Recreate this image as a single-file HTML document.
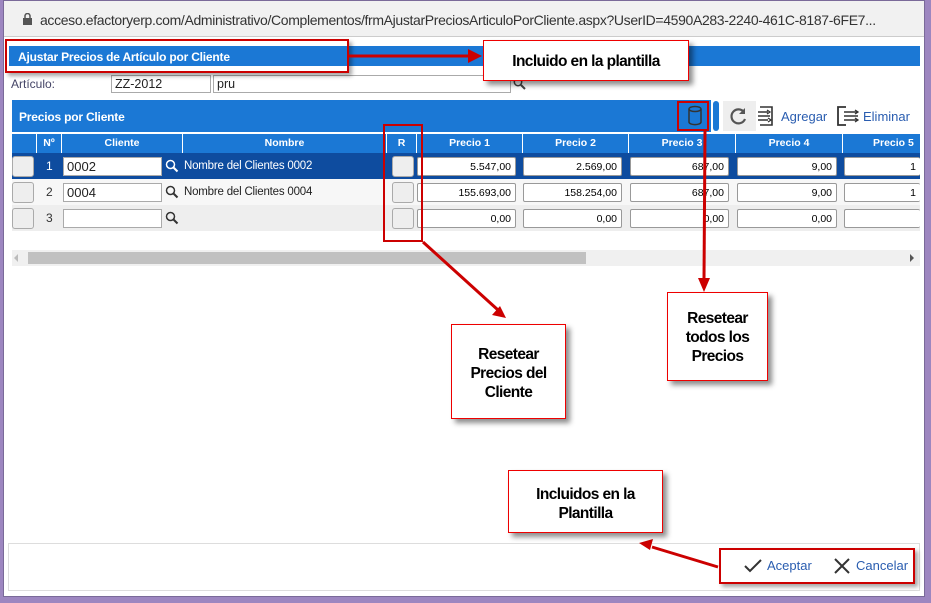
<!DOCTYPE html>
<html><head><meta charset="utf-8"><style>
*{box-sizing:border-box;margin:0;padding:0}
body{width:931px;height:603px;position:relative;overflow:hidden;background:#9d86c0;font-family:"Liberation Sans",sans-serif}
.a{position:absolute}
.win{left:3px;top:0;width:922px;height:597px;background:#fff;border:1px solid #7a6a99}
.addr{left:4px;top:1px;width:920px;height:36px;background:#f1f1f1;border-bottom:1px solid #ccc;font-size:14px;letter-spacing:-0.35px;color:#333;padding:11px 0 0 36px;white-space:nowrap;overflow:hidden}
.blue{background:#1b78d5}
.hd{color:#fff;font-weight:bold;font-size:12px;letter-spacing:-0.2px}
.inp{background:#fff;border:1px solid #aaa;font-size:13px;padding:1px 3px;color:#222}
.th{top:134px;height:19px;background:#1b78d5;color:#fff;font-weight:bold;font-size:10.5px;text-align:center;line-height:19px;border-right:1px solid #fff}
.cell{background:#fff;border:1px solid #999;border-radius:2px;font-size:10.5px;text-align:right;padding:3px 4px 0 0;height:19px}
.btn{background:#eee;border:1px solid #aaa;border-radius:3px}
.ann{background:#fff;border:1.5px solid #e00;box-shadow:4px 4px 5px rgba(0,0,0,.45);font-weight:bold;font-size:15.5px;letter-spacing:-0.6px;text-align:center;color:#000;line-height:19px}
</style></head><body>
<div class="a win"></div>
<div class="a addr"><svg class="a" style="left:18px;top:12px" width="11" height="13"><rect x="1" y="5" width="9" height="7" fill="#555"/><path d="M3 5V3a2.5 2.5 0 0 1 5 0v2" stroke="#555" stroke-width="1.5" fill="none"/></svg>acceso.efactoryerp.com/Administrativo/Complementos/frmAjustarPreciosArticuloPorCliente.aspx?UserID=4590A283-2240-461C-8187-6FE7...</div>

<div class="a blue hd" style="left:9px;top:46px;width:911px;height:20px;padding:4px 0 0 9px">Ajustar Precios de Artículo por Cliente</div>
<div class="a" style="left:11px;top:77px;font-size:12px;color:#446">Artículo:</div>
<div class="a inp" style="left:111px;top:75px;width:100px;height:18px;font-size:12.5px">ZZ-2012</div>
<div class="a inp" style="left:213px;top:75px;width:298px;height:18px;font-size:12.5px">pru</div>
<svg class="a" style="left:513px;top:77px" width="13" height="13"><circle cx="5" cy="5" r="3.7" stroke="#444" stroke-width="1.5" fill="none"/><path d="M8 8l4 4" stroke="#444" stroke-width="2"/></svg>

<div class="a blue hd" style="left:12px;top:100px;width:699px;height:32px;padding:10px 0 0 7px">Precios por Cliente</div>
<div class="a blue" style="left:713px;top:101px;width:6px;height:30px;border-radius:3px"></div>
<svg class="a" style="left:684px;top:104px" width="22" height="24"><ellipse cx="11" cy="5" rx="6" ry="2.5" stroke="#333" stroke-width="1.5" fill="none"/><path d="M5 5v13c0 3.5 12 3.5 12 0V5" stroke="#333" stroke-width="1.5" fill="none"/></svg>
<div class="a" style="left:723px;top:101px;width:33px;height:30px;background:#eee"></div>
<svg class="a" style="left:729px;top:106px" width="20" height="20"><path d="M15 6A7 7 0 1 0 16 13" stroke="#555" stroke-width="2.2" fill="none"/><path d="M16 2v6h-6z" fill="#555"/></svg>
<svg class="a" style="left:757px;top:105px" width="20" height="22"><path d="M3 2h12v18H3" stroke="#333" stroke-width="1.6" fill="none"/><path d="M1 7h10M1 11h12M1 15h10" stroke="#333" stroke-width="1.5"/><path d="M10 5l3 2-3 2M11 13l3 2-3 2" stroke="#333" stroke-width="1.3" fill="none"/></svg>
<div class="a" style="left:781px;top:109px;font-size:13px;color:#2a5db0">Agregar</div>
<svg class="a" style="left:836px;top:105px" width="26" height="22"><path d="M10 2H2v18h8" stroke="#333" stroke-width="1.8" fill="none"/><path d="M8 7h14M8 11h14M8 15h14" stroke="#333" stroke-width="1.5"/><path d="M19 5l3 2-3 2M19 13l3 2-3 2" stroke="#333" stroke-width="1.3" fill="none"/></svg>
<div class="a" style="left:863px;top:109px;font-size:13px;color:#2a5db0">Eliminar</div>

<div class="a th" style="left:12px;width:25px"></div>
<div class="a th" style="left:37px;width:25px">Nº</div>
<div class="a th" style="left:62px;width:121px">Cliente</div>
<div class="a th" style="left:183px;width:204px">Nombre</div>
<div class="a th" style="left:387px;width:30px">R</div>
<div class="a th" style="left:417px;width:106px">Precio 1</div>
<div class="a th" style="left:523px;width:106px">Precio 2</div>
<div class="a th" style="left:629px;width:107px">Precio 3</div>
<div class="a th" style="left:736px;width:107px">Precio 4</div>
<div class="a th" style="left:843px;width:77px;text-align:left;padding-left:30px;border:0">Precio 5</div>

<div class="a" style="left:12px;top:153px;width:908px;height:26px;background:#0e4c9f"></div>
<div class="a" style="left:12px;top:179px;width:908px;height:26px;background:#f7f7f7"></div>
<div class="a" style="left:12px;top:205px;width:908px;height:26px;background:#eee"></div>

<div class="a btn" style="left:12px;top:156px;width:22px;height:21px"></div>
<div class="a btn" style="left:12px;top:182px;width:22px;height:21px"></div>
<div class="a btn" style="left:12px;top:208px;width:22px;height:21px"></div>
<div class="a" style="left:46px;top:159px;font-size:12px;color:#fff">1</div>
<div class="a" style="left:46px;top:185px;font-size:12px;color:#333">2</div>
<div class="a" style="left:46px;top:211px;font-size:12px;color:#333">3</div>
<div class="a inp" style="left:63px;top:157px;width:99px;height:19px">0002</div>
<div class="a inp" style="left:63px;top:183px;width:99px;height:19px">0004</div>
<div class="a inp" style="left:63px;top:209px;width:99px;height:19px"></div>
<svg class="a" style="left:165px;top:159px" width="14" height="14"><circle cx="5.5" cy="5.5" r="4" stroke="#fff" stroke-width="1.5" fill="none"/><path d="M8.5 8.5l4 4" stroke="#fff" stroke-width="2"/></svg>
<svg class="a" style="left:165px;top:185px" width="14" height="14"><circle cx="5.5" cy="5.5" r="4" stroke="#333" stroke-width="1.5" fill="none"/><path d="M8.5 8.5l4 4" stroke="#333" stroke-width="2"/></svg>
<svg class="a" style="left:165px;top:211px" width="14" height="14"><circle cx="5.5" cy="5.5" r="4" stroke="#333" stroke-width="1.5" fill="none"/><path d="M8.5 8.5l4 4" stroke="#333" stroke-width="2"/></svg>
<div class="a" style="left:184px;top:160px;font-size:11.5px;letter-spacing:-0.2px;color:#fff">Nombre del Clientes 0002</div>
<div class="a" style="left:184px;top:186px;font-size:11.5px;letter-spacing:-0.2px;color:#222">Nombre del Clientes 0004</div>
<div class="a btn" style="left:392px;top:156px;width:22px;height:21px"></div>
<div class="a btn" style="left:392px;top:182px;width:22px;height:21px"></div>
<div class="a btn" style="left:392px;top:208px;width:22px;height:21px"></div>

<div class="a cell" style="left:417px;top:157px;width:99px">5.547,00</div>
<div class="a cell" style="left:523px;top:157px;width:99px">2.569,00</div>
<div class="a cell" style="left:630px;top:157px;width:99px">687,00</div>
<div class="a cell" style="left:737px;top:157px;width:100px">9,00</div>
<div class="a cell" style="left:844px;top:157px;width:76px;border-right:0">1</div>
<div class="a cell" style="left:417px;top:183px;width:99px">155.693,00</div>
<div class="a cell" style="left:523px;top:183px;width:99px">158.254,00</div>
<div class="a cell" style="left:630px;top:183px;width:99px">687,00</div>
<div class="a cell" style="left:737px;top:183px;width:100px">9,00</div>
<div class="a cell" style="left:844px;top:183px;width:76px;border-right:0">1</div>
<div class="a cell" style="left:417px;top:209px;width:99px">0,00</div>
<div class="a cell" style="left:523px;top:209px;width:99px">0,00</div>
<div class="a cell" style="left:630px;top:209px;width:99px">0,00</div>
<div class="a cell" style="left:737px;top:209px;width:100px">0,00</div>
<div class="a cell" style="left:844px;top:209px;width:76px;border-right:0"></div>

<div class="a" style="left:12px;top:250px;width:908px;height:16px;background:#f0f0f0"></div>
<div class="a" style="left:28px;top:252px;width:558px;height:12px;background:#c1c1c1"></div>
<div class="a" style="left:14px;top:254px;width:0;height:0;border:4px solid transparent;border-right-color:#bbb;border-left:0"></div>
<div class="a" style="left:910px;top:254px;width:0;height:0;border:4px solid transparent;border-left-color:#555;border-right:0"></div>

<div class="a" style="left:8px;top:543px;width:912px;height:48px;border:1px solid #ddd;background:#fff"></div>
<svg class="a" style="left:743px;top:558px" width="20" height="16"><path d="M2 8l5 5L18 2" stroke="#333" stroke-width="2" fill="none"/></svg>
<div class="a" style="left:767px;top:558px;font-size:13px;color:#2a5db0">Aceptar</div>
<svg class="a" style="left:833px;top:557px" width="18" height="18"><path d="M2 2l14 14M16 2L2 16" stroke="#333" stroke-width="2"/></svg>
<div class="a" style="left:856px;top:558px;font-size:13px;color:#2a5db0">Cancelar</div>

<div class="a" style="left:5px;top:39px;width:344px;height:34px;border:2px solid #c00;box-shadow:3px 3px 4px rgba(0,0,0,.35)"></div>
<div class="a" style="left:383px;top:124px;width:40px;height:118px;border:2px solid #c00"></div>
<div class="a" style="left:677px;top:101px;width:32px;height:30px;border:2px solid #c00"></div>
<div class="a" style="left:719px;top:548px;width:196px;height:36px;border:2px solid #c00;box-shadow:3px 3px 4px rgba(0,0,0,.35)"></div>
<svg class="a" style="left:0;top:0" width="931" height="603">
<g stroke="#c00" stroke-width="3" fill="#c00">
<line x1="349" y1="56" x2="470" y2="56"/><path d="M482 56l-14-7v14z" stroke="none"/>
<line x1="423" y1="242" x2="498" y2="310"/><path d="M506 318l-14-3 8-9z" stroke="none"/>
<line x1="705" y1="131" x2="704" y2="280"/><path d="M704 292l-6-14h12z" stroke="none"/>
<line x1="718" y1="567" x2="652" y2="547"/><path d="M639 543l14-4-3 11z" stroke="none"/>
</g></svg>
<div class="a ann" style="left:483px;top:40px;width:206px;height:41px;padding-top:11px">Incluido en la plantilla</div>
<div class="a ann" style="left:451px;top:324px;width:115px;height:95px;padding-top:20px">Resetear<br>Precios del<br>Cliente</div>
<div class="a ann" style="left:667px;top:292px;width:101px;height:89px;padding-top:16px">Resetear<br>todos los<br>Precios</div>
<div class="a ann" style="left:508px;top:470px;width:155px;height:63px;padding-top:14px">Incluidos en la<br>Plantilla</div>
</body></html>
